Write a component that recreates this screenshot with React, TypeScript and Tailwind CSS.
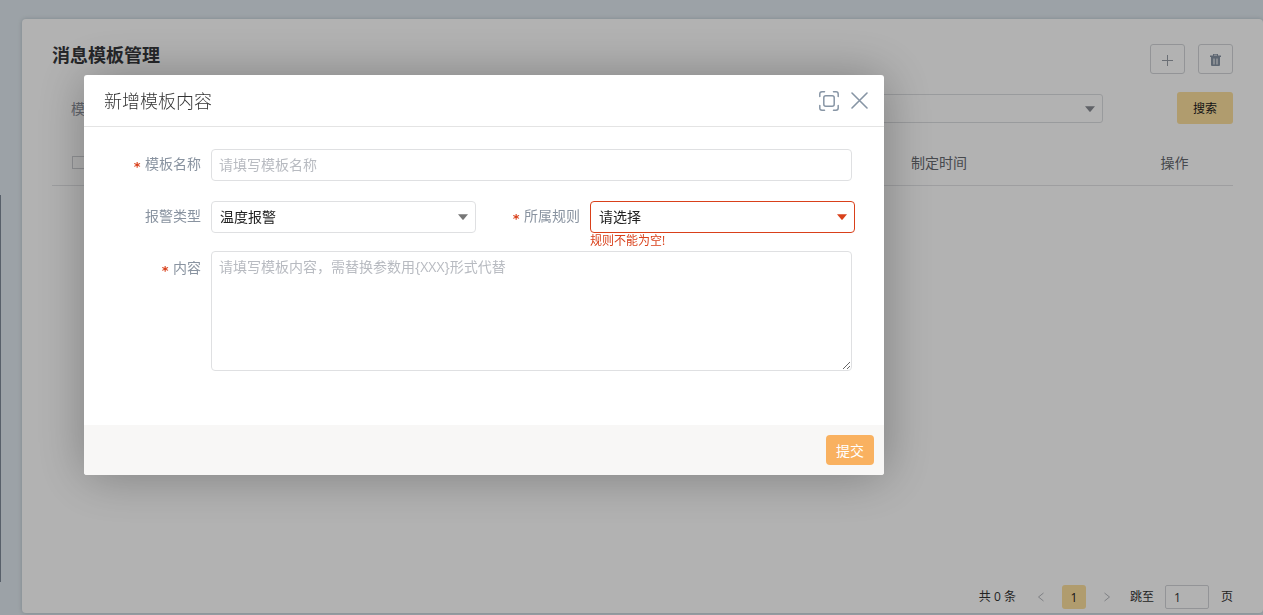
import React, { useState } from 'react';

const CaretIcon = ({ className }: { className: string }) => (
    <svg viewBox="0 0 10 6" className={`pointer-events-none absolute h-[6px] w-[10px] ${className}`} fill="currentColor">
        <path d="M0 0.3h10L5.6 5.6q-.6.6-1.2 0z" />
    </svg>
);

const Required = () => (
    <span className="mr-1 inline-block pt-[3px] align-middle font-['DejaVu_Sans_Mono',monospace] text-[13px] leading-none font-bold text-[#d9401a]">
        *
    </span>
);

// List page behind the dialog
const TemplateList: React.FC = () => (
    <div className="flex min-h-screen bg-[#e0e9ef]">
        {/* Edge of the collapsed side menu */}
        <aside className="mt-[195px] mb-[33px] w-px bg-[#7f8a99]" />

        <main className="mt-[19px] mb-[2px] ml-[21px] flex flex-1 flex-col rounded-[4px] bg-white px-[30px] pt-[25px] pb-1 shadow-[0_0_4px_rgba(80,100,120,0.3)]">
            <header className="flex items-start justify-between">
                <h1 className="text-[18px] leading-[22px] font-bold text-[#36373b]">消息模板管理</h1>
                <div className="flex gap-[13px]">
                    <button
                        aria-label="新增"
                        className="flex h-[30px] w-[35px] items-center justify-center rounded-[3px] border border-[#d3d5d9] text-[#9a9fa8]"
                    >
                        <svg viewBox="0 0 11 11" className="mt-[3px] h-[11px] w-[11px]" stroke="currentColor" fill="none">
                            <path d="M0 5.5h11M5.5 0v11" />
                        </svg>
                    </button>
                    <button
                        aria-label="删除"
                        className="flex h-[30px] w-[35px] items-center justify-center rounded-[3px] border border-[#d3d5d9] text-[#8794a4]"
                    >
                        <svg viewBox="0 0 11 12" className="mt-[2px] h-3 w-[11px]" fill="currentColor">
                            <path fillRule="evenodd" d="M3 0h5v1.5h3V3H0V1.5h3zM4 .8v.7h3V.8z" />
                            <path fillRule="evenodd" d="M1 3h9v8q0 1-1 1H2q-1 0-1-1zM3.5 4.5h1v6h-1zM6.5 4.5h1v6h-1z" />
                        </svg>
                    </button>
                </div>
            </header>

            <div className="mt-[18px] flex items-center pl-[19px]">
                <label htmlFor="search-type" className="w-[66px] text-[14px] text-[#8a8f99]">
                    模板
                </label>
                <div className="relative flex-1">
                    <select
                        id="search-type"
                        className="block h-[29px] w-full appearance-none rounded-[3px] border border-[#dcdee1]"
                    />
                    <CaretIcon className="top-3 right-2 text-[#8a8d94]" />
                </div>
                <button className="ml-[74px] h-8 w-14 rounded-[3px] bg-[#fde09e] pt-px text-[12px] text-[#222]">搜索</button>
            </div>

            <table className="mt-4 w-full table-fixed border-b border-[#e2e3e6] text-[14px] text-[#66696f]">
                <thead>
                    <tr className="h-[45px]">
                        <th className="w-[72px] pl-5 text-left">
                            <input
                                type="checkbox"
                                aria-label="全选"
                                className="block h-[13px] w-[13px] appearance-none border border-[#d0d2d6]"
                            />
                        </th>
                        <th />
                        <th className="w-[354px] font-normal">制定时间</th>
                        <th className="w-[117px] font-normal">操作</th>
                    </tr>
                </thead>
            </table>

            <nav className="mt-auto flex h-6 items-center justify-end text-[12px] text-[#333]">
                <span>共 0 条</span>
                <button aria-label="上一页" className="ml-[21px] w-2 text-[#b5b8bd]">
                    <svg viewBox="0 0 8 10" className="h-[10px] w-2" stroke="currentColor" fill="none">
                        <path d="M6.5 1L1.5 5l5 4" />
                    </svg>
                </button>
                <button className="ml-[17px] h-6 w-6 rounded-[3px] bg-[#fde09e] pt-px text-[12px] text-[#222]">1</button>
                <button aria-label="下一页" className="ml-[17px] w-2 text-[#b5b8bd]">
                    <svg viewBox="0 0 8 10" className="h-[10px] w-2" stroke="currentColor" fill="none">
                        <path d="M1.5 1l5 4-5 4" />
                    </svg>
                </button>
                <label htmlFor="page-no" className="ml-[19px]">
                    跳至
                </label>
                <input
                    id="page-no"
                    defaultValue="1"
                    className="mr-3 ml-[11px] h-6 w-11 rounded-[2px] border border-[#d3d5d9] px-2 text-[12px]"
                />
                <span>页</span>
            </nav>
        </main>
    </div>
);

const TemplateDialog: React.FC = () => {
    const [type, setType] = useState('温度报警');
    const [rule, setRule] = useState('');

    return (
        <div className="fixed inset-0 bg-black/30 pt-[75px] pl-[84px]">
            <form
                role="dialog"
                aria-labelledby="dialog-title"
                onSubmit={(e) => e.preventDefault()}
                className="w-full max-w-[800px] overflow-hidden rounded-[3px] bg-white text-[14px] shadow-[1px_1px_50px_rgba(0,0,0,0.3)]"
            >
                <div className="flex h-[52px] items-center border-b border-[#e4e4e4] pr-4 pl-5">
                    <h2 id="dialog-title" className="flex-1 pt-[2px] text-[18px] font-light text-[#333]">
                        新增模板内容
                    </h2>
                    <button type="button" aria-label="全屏" className="text-[#8795a5]">
                        <svg
                            viewBox="0 0 20 20"
                            className="h-5 w-5"
                            fill="none"
                            stroke="currentColor"
                            strokeWidth="1.5"
                            strokeLinecap="round"
                        >
                            <path d="M.8 5.5V3Q.8.8 3 .8h2.5M14.5.8H17q2.2 0 2.2 2.2v2.5M19.2 14.5V17q0 2.2-2.2 2.2h-2.5M5.5 19.2H3Q.8 19.2.8 17v-2.5" />
                            <rect x="4.8" y="4.8" width="10.4" height="10.4" rx="2" />
                        </svg>
                    </button>
                    <button type="button" aria-label="关闭" className="ml-3 text-[#8795a5]">
                        <svg
                            viewBox="0 0 17 17"
                            className="h-[17px] w-[17px]"
                            fill="none"
                            stroke="currentColor"
                            strokeWidth="1.6"
                            strokeLinecap="round"
                        >
                            <path d="M1 1l15 15M16 1L1 16" />
                        </svg>
                    </button>
                </div>

                <div className="pt-[22px] pb-[54px]">
                    <div className="flex gap-[10px] pr-8">
                        <label htmlFor="name" className="w-[117px] text-right leading-[30px] text-[#8993a0]">
                            <Required />
                            模板名称
                        </label>
                        <input
                            id="name"
                            placeholder="请填写模板名称"
                            className="h-8 min-w-0 flex-1 rounded-[4px] border border-[#dfe0e2] px-[7px] pb-[2px] placeholder:text-[#b8bbc1]"
                        />
                    </div>

                    <div className="mt-5 flex gap-[10px] pr-[29px]">
                        <label htmlFor="type" className="w-[117px] text-right leading-[30px] text-[#8993a0]">
                            报警类型
                        </label>
                        <div className="relative flex-1">
                            <select
                                id="type"
                                value={type}
                                onChange={(e) => setType(e.target.value)}
                                className="block h-8 w-full appearance-none rounded-[4px] border border-[#dfe0e2] px-2 pb-[2px] text-[#222]"
                            >
                                <option>温度报警</option>
                            </select>
                            <CaretIcon className="top-[13px] right-2 text-[#777]" />
                        </div>
                        <label htmlFor="rule" className="w-[94px] text-right leading-[30px] text-[#8993a0]">
                            <Required />
                            所属规则
                        </label>
                        <div className="relative flex-1">
                            <select
                                id="rule"
                                value={rule}
                                onChange={(e) => setRule(e.target.value)}
                                className="block h-8 w-full appearance-none rounded-[4px] border border-[#d9401a] px-2 pb-[2px] text-[#222]"
                            >
                                <option value="">请选择</option>
                            </select>
                            <CaretIcon className="top-[13px] right-2 text-[#d9401a]" />
                            <p className="mb-[2px] text-[12px] leading-4 text-[#d9401a]">规则不能为空!</p>
                        </div>
                    </div>

                    <div className="flex gap-[10px] pr-8">
                        <label htmlFor="content" className="w-[117px] pt-[2px] text-right leading-[30px] text-[#8993a0]">
                            <Required />
                            内容
                        </label>
                        <textarea
                            id="content"
                            placeholder="请填写模板内容，需替换参数用{XXX}形式代替"
                            className="block h-[120px] min-w-0 flex-1 resize-y rounded-[4px] border border-[#dfe0e2] px-[7px] py-1 placeholder:text-[#b8bbc1]"
                        />
                    </div>
                </div>

                <div className="flex justify-end bg-[#f8f7f6] p-[10px]">
                    <button type="submit" className="h-[30px] w-12 rounded-[4px] bg-[#f9b160] text-white">
                        提交
                    </button>
                </div>
            </form>
        </div>
    );
};

const App: React.FC = () => (
    <div className="font-['Open_Sans','Noto_Sans_CJK_SC',sans-serif]">
        <TemplateList />
        <TemplateDialog />
    </div>
);

export default App;
